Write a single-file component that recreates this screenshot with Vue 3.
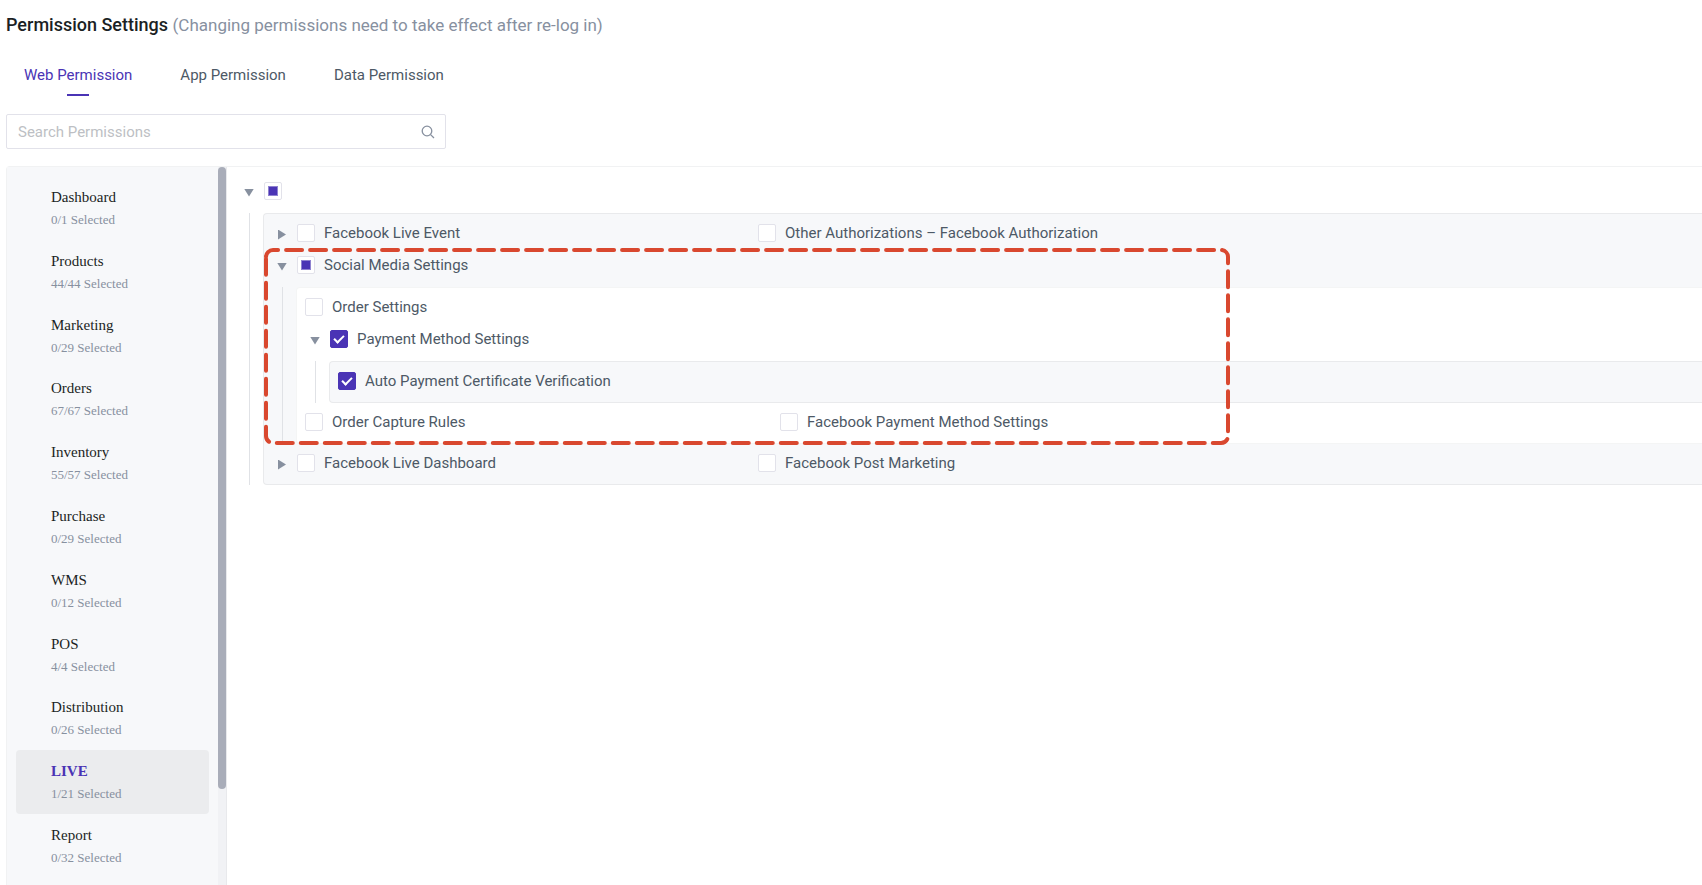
<script setup>
import { ref, reactive } from 'vue'

const tabs = ['Web Permission', 'App Permission', 'Data Permission']
const activeTab = ref('Web Permission')
const keyword = ref('')

const modules = [
  { name: 'Dashboard', count: '0/1' },
  { name: 'Products', count: '44/44' },
  { name: 'Marketing', count: '0/29' },
  { name: 'Orders', count: '67/67' },
  { name: 'Inventory', count: '55/57' },
  { name: 'Purchase', count: '0/29' },
  { name: 'WMS', count: '0/12' },
  { name: 'POS', count: '4/4' },
  { name: 'Distribution', count: '0/26' },
  { name: 'LIVE', count: '1/21' },
  { name: 'Report', count: '0/32' },
]
const activeModule = ref('LIVE')

const granted = reactive({
  liveEvent: false,
  otherAuth: false,
  orderSettings: false,
  paymentMethod: true,
  autoVerify: true,
  captureRules: false,
  fbPayment: false,
  liveDashboard: false,
  postMarketing: false,
})
</script>

<template>
  <div class="page">
    <h1 class="title">
      Permission Settings
      <span class="note">(Changing permissions need to take effect after re-log in)</span>
    </h1>

    <nav class="tabs" role="tablist">
      <button
        v-for="tab in tabs"
        :key="tab"
        type="button"
        role="tab"
        class="tab"
        :class="{ active: tab === activeTab }"
        :aria-selected="tab === activeTab"
        @click="activeTab = tab"
      >{{ tab }}</button>
    </nav>

    <div class="search">
      <input v-model="keyword" type="text" placeholder="Search Permissions" aria-label="Search Permissions" />
      <svg class="search-icon" viewBox="0 0 14 14" aria-hidden="true">
        <circle cx="6" cy="6" r="4.8" />
        <path d="M9.6 9.6 13 13" />
      </svg>
    </div>

    <div class="body">
      <aside class="sidebar">
        <div class="modules">
          <button
            v-for="m in modules"
            :key="m.name"
            type="button"
            class="module"
            :class="{ active: m.name === activeModule }"
            @click="activeModule = m.name"
          >
            <span class="name">{{ m.name }}</span>
            <span class="count">{{ m.count }} Selected</span>
          </button>
        </div>
        <div class="scrollbar"><div class="thumb"></div></div>
      </aside>

      <main class="tree">
        <div class="row">
          <button type="button" class="caret open" aria-label="Collapse all"></button>
          <label class="perm"><input type="checkbox" aria-label="All LIVE permissions" :indeterminate.prop="true" /></label>
        </div>
        <div class="branch">
          <div class="box">
            <div class="cols">
              <div class="row">
                <button type="button" class="caret" aria-label="Expand Facebook Live Event"></button>
                <label class="perm"><input v-model="granted.liveEvent" type="checkbox" /><span>Facebook Live Event</span></label>
              </div>
              <div class="row">
                <label class="perm"><input v-model="granted.otherAuth" type="checkbox" /><span>Other Authorizations – Facebook Authorization</span></label>
              </div>
            </div>

            <section class="group">
              <div class="row">
                <button type="button" class="caret open" aria-label="Collapse Social Media Settings"></button>
                <label class="perm"><input type="checkbox" :indeterminate.prop="true" /><span>Social Media Settings</span></label>
              </div>
              <div class="branch">
                <div class="box white">
                  <div class="row">
                    <label class="perm"><input v-model="granted.orderSettings" type="checkbox" /><span>Order Settings</span></label>
                  </div>
                  <div class="row">
                    <button type="button" class="caret open" aria-label="Collapse Payment Method Settings"></button>
                    <label class="perm"><input v-model="granted.paymentMethod" type="checkbox" /><span>Payment Method Settings</span></label>
                  </div>
                  <div class="branch">
                    <div class="box">
                      <div class="row">
                        <label class="perm"><input v-model="granted.autoVerify" type="checkbox" /><span>Auto Payment Certificate Verification</span></label>
                      </div>
                    </div>
                  </div>
                  <div class="cols">
                    <div class="row">
                      <label class="perm"><input v-model="granted.captureRules" type="checkbox" /><span>Order Capture Rules</span></label>
                    </div>
                    <div class="row">
                      <label class="perm"><input v-model="granted.fbPayment" type="checkbox" /><span>Facebook Payment Method Settings</span></label>
                    </div>
                  </div>
                </div>
              </div>
              <svg class="highlight" viewBox="0 0 966 197" aria-hidden="true">
                <path d="M2 9a7 7 0 0 1 7-7h948a7 7 0 0 1 7 7v179a7 7 0 0 1-7 7h-948a7 7 0 0 1-7-7z" />
              </svg>
            </section>

            <div class="cols">
              <div class="row">
                <button type="button" class="caret" aria-label="Expand Facebook Live Dashboard"></button>
                <label class="perm"><input v-model="granted.liveDashboard" type="checkbox" /><span>Facebook Live Dashboard</span></label>
              </div>
              <div class="row">
                <label class="perm"><input v-model="granted.postMarketing" type="checkbox" /><span>Facebook Post Marketing</span></label>
              </div>
            </div>
          </div>
        </div>
      </main>
    </div>
  </div>
</template>

<style>
html,
body {
  margin: 0;
  background: #fff;
}
</style>

<style scoped>
.page {
  box-sizing: border-box;
  display: flex;
  flex-direction: column;
  min-height: 100vh;
  padding: 12px 0 0 6px;
  overflow: hidden;
  color: #4d5966;
  font: 15px/24px Roboto, "Liberation Sans", sans-serif;
}
button {
  margin: 0;
  padding: 0;
  border: 0;
  background: none;
  color: inherit;
  font: inherit;
  cursor: pointer;
}
.title {
  margin: 0;
  color: #1b1f24;
  font-size: 18px;
  font-weight: 500;
  line-height: 26px;
}
.note {
  color: #87909f;
  font-size: 17px;
  font-weight: 400;
}
.tabs {
  display: flex;
  gap: 48px;
  margin-top: 25px;
  padding-left: 18px;
}
.tab {
  display: flex;
  flex-direction: column;
  align-items: center;
}
.tab::after {
  content: "";
  width: 22px;
  height: 2px;
  margin-top: 7px;
}
.tab.active {
  color: #4a34b5;
}
.tab.active::after {
  background: #4a34b5;
}
.search {
  box-sizing: border-box;
  display: flex;
  align-items: center;
  width: 440px;
  max-width: 100%;
  height: 35px;
  margin-top: 18px;
  padding: 0 10px 0 11px;
  border: 1px solid #e2e2ea;
  border-radius: 2px;
}
.search input {
  flex: 1;
  min-width: 0;
  padding: 0;
  border: 0;
  outline: 0;
  background: none;
  color: #4d5966;
  font: inherit;
}
.search input::placeholder {
  color: #bdbfc4;
  opacity: 1;
}
.search-icon {
  width: 14px;
  height: 14px;
  fill: none;
  stroke: #87909f;
  stroke-width: 1.3;
}
.body {
  display: flex;
  flex: 1;
  margin-top: 17px;
  border-top: 1px solid #f1f2f3;
  border-left: 1px solid #f1f2f3;
  border-top-left-radius: 4px;
}
.sidebar {
  display: flex;
  flex: none;
  border-right: 1px solid #e8e9ec;
  background: #f7f8fa;
}
.modules {
  display: grid;
  grid-auto-rows: 1fr;
  width: 193px;
  height: 702px;
  padding: 9px 9px 0;
  font-family: "Liberation Serif", serif;
}
.module {
  display: flex;
  flex-direction: column;
  justify-content: center;
  padding-left: 35px;
  border-radius: 4px;
  text-align: left;
}
.module .name {
  color: #1b1f24;
  font-size: 15px;
  line-height: 24px;
}
.module .count {
  color: #87909f;
  font-size: 13px;
  line-height: 22px;
}
.module.active {
  background: #ebecee;
}
.module.active .name {
  color: #4a34b5;
  font-weight: 700;
}
.scrollbar {
  display: flex;
  flex-direction: column;
  width: 8px;
  background: #f1f2f5;
}
.scrollbar::after {
  content: "";
  flex: 2;
}
.thumb {
  flex: 13;
  border-radius: 4px;
  background: #a9adb9;
}
.tree {
  flex: 1;
  min-width: 0;
  margin-right: -28px;
  padding: 8px 0 0 12px;
}
.row {
  display: flex;
  align-items: center;
  gap: 5px;
  height: 32px;
}
.cols {
  display: grid;
  grid-template-columns: repeat(3, 1fr);
}
.branch {
  margin: 6px 0 3px 10px;
  padding-left: 13px;
  border-left: 1px solid #e0e2e6;
}
.box {
  padding: 3px 0 5px 8px;
  border: 1px solid #e9eaec;
  border-right: 0;
  border-radius: 4px 0 0 4px;
  background: #f7f8fa;
}
.box.white {
  border-color: #f4f5f5;
  background: #fff;
}
.group {
  position: relative;
  margin-bottom: 3px;
}
.group > .branch {
  margin-bottom: 0;
}
.caret {
  display: grid;
  place-items: center;
  width: 20px;
  height: 20px;
}
.caret::before {
  content: "";
  width: 8px;
  height: 10px;
  margin-top: 3px;
  background: #87909f;
  clip-path: polygon(0 0, 100% 50%, 0 100%);
}
.caret.open::before {
  width: 10px;
  height: 8px;
  clip-path: polygon(0 0, 100% 0, 50% 100%);
}
.perm {
  display: flex;
  align-items: center;
  gap: 9px;
  white-space: nowrap;
  cursor: pointer;
}
.perm input {
  appearance: none;
  box-sizing: border-box;
  display: grid;
  place-items: center;
  width: 18px;
  height: 18px;
  margin: 0;
  border: 1px solid #e2e2ea;
  border-radius: 2px;
  background: #fff;
}
.perm input:checked {
  border-color: #4a34b5;
  background: #4a34b5;
}
.perm input:checked::after {
  content: "";
  width: 8px;
  height: 4px;
  margin-bottom: 3px;
  border: solid #fff;
  border-width: 0 0 2px 2px;
  transform: rotate(-45deg);
}
.perm input:indeterminate::after {
  content: "";
  box-sizing: border-box;
  width: 10px;
  height: 10px;
  border: 1px solid #8f82d0;
  background: #4a34b5;
  background-clip: padding-box;
}
.highlight {
  position: absolute;
  top: -1px;
  left: -8px;
  width: 966px;
  height: 197px;
  fill: none;
  stroke: #d9482f;
  stroke-width: 4;
  stroke-linecap: round;
  stroke-dasharray: 16 8;
  pointer-events: none;
}
</style>
